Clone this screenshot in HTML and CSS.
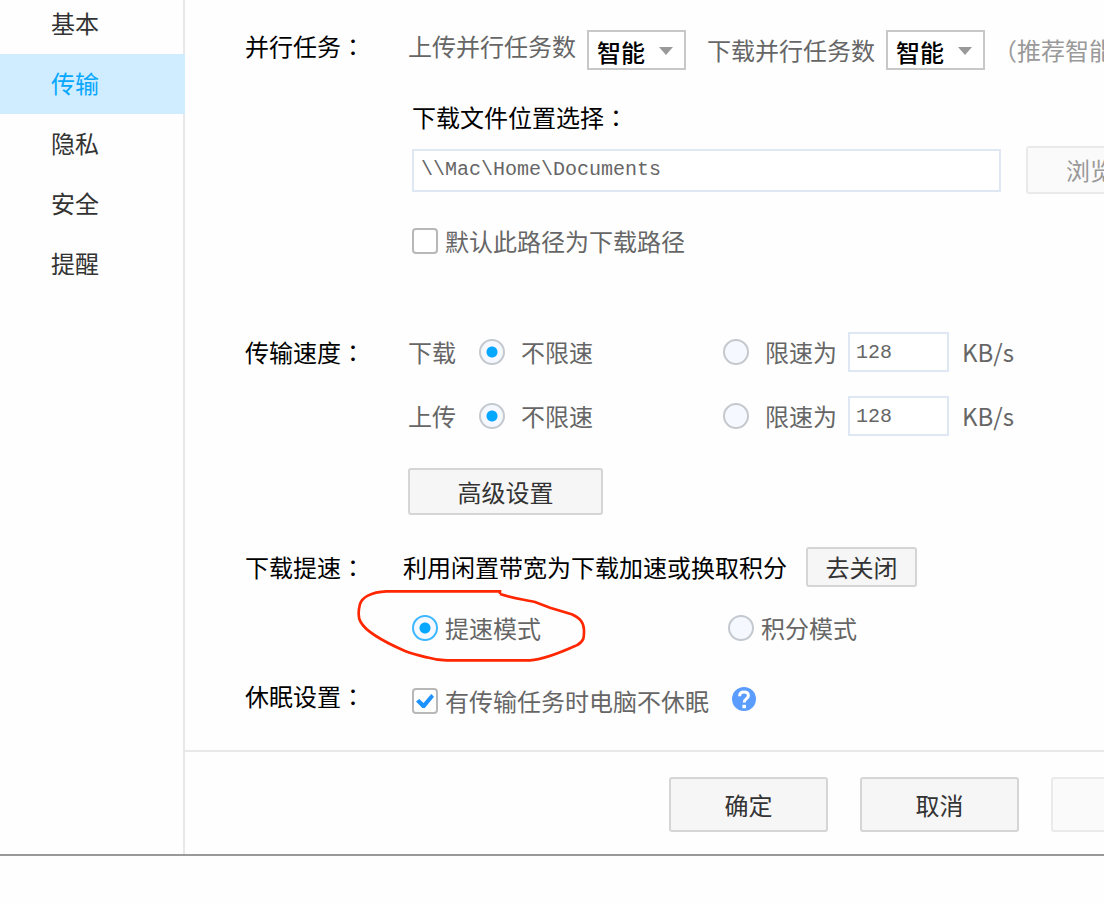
FILE: index.html
```
<!DOCTYPE html>
<html lang="zh-CN">
<head>
<meta charset="utf-8">
<title>设置</title>
<link rel="stylesheet" href="styles.css">
</head>
<body>
<div class="window">
  <nav class="sidebar">
    <a class="tab" href="#basic">基本</a>
    <a class="tab tab-active" href="#transfer">传输</a>
    <a class="tab" href="#privacy">隐私</a>
    <a class="tab" href="#security">安全</a>
    <a class="tab" href="#remind">提醒</a>
  </nav>
  <div class="panel">
    <main class="settings">
      <section class="row tasks">
        <h2 class="title">并行任务<span class="colon" lang="zh-TW">：</span></h2>
        <div class="line">
          <label class="tasks-up" for="up-count">上传并行任务数</label>
          <span class="picker"><select id="up-count"><option>智能</option></select></span>
          <label class="tasks-down" for="down-count">下载并行任务数</label>
          <span class="picker"><select id="down-count"><option>智能</option></select></span>
          <span class="hint">（推荐智能</span>
        </div>
      </section>

      <section class="row location">
        <div class="location-body">
          <label class="strong" for="path">下载文件位置选择<span class="colon" lang="zh-TW">：</span></label>
          <div class="path-line">
            <input class="field path" id="path" type="text" value="\\Mac\Home\Documents">
            <button class="button browse" type="button" disabled>浏览</button>
          </div>
          <label class="choice"><input class="check" type="checkbox">默认此路径为下载路径</label>
        </div>
      </section>

      <section class="row speed">
        <h2 class="title">传输速度<span class="colon" lang="zh-TW">：</span></h2>
        <div class="speed-body">
          <div class="speed-line">
            <span>下载</span>
            <label class="choice wide"><input class="radio" type="radio" name="down" checked>不限速</label>
            <label class="choice wide"><input class="radio" type="radio" name="down">限速为</label>
            <input class="field limit" type="text" value="128" aria-label="下载限速">
            <span>KB/s</span>
          </div>
          <div class="speed-line">
            <span>上传</span>
            <label class="choice wide"><input class="radio" type="radio" name="up" checked>不限速</label>
            <label class="choice wide"><input class="radio" type="radio" name="up">限速为</label>
            <input class="field limit" type="text" value="128" aria-label="上传限速">
            <span>KB/s</span>
          </div>
          <button class="button advanced" type="button">高级设置</button>
        </div>
      </section>

      <section class="row boost">
        <h2 class="title">下载提速<span class="colon" lang="zh-TW">：</span></h2>
        <div class="boost-body">
          <div class="boost-line">
            <span class="strong">利用闲置带宽为下载加速或换取积分</span>
            <button class="button close" type="button">去关闭</button>
          </div>
          <div class="modes">
            <label class="choice"><input class="radio radio-focus" type="radio" name="mode" checked>提速模式</label>
            <label class="choice"><input class="radio" type="radio" name="mode">积分模式</label>
            <svg class="mark" viewBox="378 174 696 228" aria-hidden="true"><path d="M810 192V184H470C420 186 396 204 390 222C384 245 385 264 392 276C410 309 470 339 525 363C545 371 565 376 590 382C610 388 625 391 650 391H900C950 388 1008 360 1042 345C1063 333 1062 322 1062 300C1061 277 1051 265 1025 253L960 233L915 216C880 208 850 205 810 192"/></svg>
          </div>
        </div>
      </section>

      <section class="row sleep">
        <h2 class="title">休眠设置<span class="colon" lang="zh-TW">：</span></h2>
        <div class="sleep-line">
          <label class="choice"><input class="check" type="checkbox" checked>有传输任务时电脑不休眠</label>
          <button class="help" type="button" aria-label="帮助"><svg viewBox="0 0 24 24"><circle cx="12" cy="12" r="12"/><path d="M7.6 9.2C7.6 6.5 9.4 5 12 5S16.4 6.5 16.4 8.8C16.4 11.7 12.2 11.6 12.2 15.4"/><rect x="10.4" y="17.8" width="3.6" height="3.4"/></svg></button>
        </div>
      </section>
    </main>
    <footer class="actions">
      <button class="button action" type="button">确定</button>
      <button class="button action" type="button">取消</button>
      <button class="button action" type="button" aria-label="应用" disabled></button>
    </footer>
  </div>
</div>
</body>
</html>
```
FILE: styles.css
```
* { box-sizing: border-box; }

body {
  margin: 0;
  background: #fefefe;
  color: #666;
  font: 24px/36px "Noto Sans CJK SC", sans-serif;
  overflow-x: hidden;
}

.window {
  display: grid;
  grid-template-columns: 185px minmax(0, 1fr);
  border-bottom: 2px solid #999;
  overflow: hidden;
}

.sidebar {
  margin-top: -6px;
  border-right: 2px solid #e8e8e8;
}

.tab {
  display: block;
  height: 60px;
  padding-left: 51px;
  line-height: 58px;
  color: #333;
  text-decoration: none;
}

.tab-active {
  margin-right: -2px;
  background: #cfedff;
  color: #06a7ff;
}

.panel {
  min-width: 0;
  overflow: hidden;
  white-space: nowrap;
}

.settings {
  padding: 30px 0 31px 60px;
}

.row {
  display: grid;
  grid-template-columns: 163px minmax(0, 1fr);
}

.title {
  margin: 0;
  font-size: 24px;
  font-weight: 400;
  color: #000;
}

/* Traditional Chinese punctuation sits in the middle of its cell */
.colon { font-family: "Noto Sans CJK TC", sans-serif; }

.strong { color: #000; }

.line {
  display: flex;
  align-items: flex-start;
}

.tasks .title { line-height: 32px; }

.tasks-up {
  margin-right: 11px;
  line-height: 32px;
}

.tasks-down {
  margin: 0 11px 0 21px;
  line-height: 40px;
}

.hint {
  margin-left: 8px;
  line-height: 40px;
  color: #999;
}

.picker {
  position: relative;
  flex: none;
}

.picker select {
  display: block;
  width: 99px;
  height: 40px;
  padding: 2px 8px 0;
  border: 2px solid #c8c8c8;
  border-radius: 0;
  background: #fff;
  color: #000;
  font: inherit;
  font-weight: 500;
  appearance: none;
}

.picker::after {
  content: "";
  position: absolute;
  top: 17px;
  right: 13px;
  border: 7px solid transparent;
  border-top: 8px solid #999;
  border-bottom: 0;
  pointer-events: none;
}

.location { padding-top: 29px; }

.location-body {
  grid-column: 2;
  padding-left: 4px;
}

.path-line {
  display: flex;
  align-items: center;
  gap: 25px;
  margin: 11px 0 29px;
}

.field {
  flex: none;
  border: 2px solid #dfe8f2;
  background: #fff;
  color: #666;
  font: 20px "Liberation Mono", monospace;
}

.path {
  width: 589px;
  height: 43px;
  padding: 0 7px 1px;
}

.button {
  flex: none;
  padding: 0;
  border: 2px solid #d5d5d5;
  border-radius: 3px;
  background: #f6f6f6;
  color: #333;
  font: inherit;
}

.button:disabled {
  border-color: #eaeaea;
  background: #fafafa;
  color: #999;
}

.browse {
  width: 128px;
  height: 48px;
}

.choice {
  display: flex;
  align-items: center;
  gap: 7px;
}

.wide { gap: 16px; }

.check,
.radio {
  flex: none;
  width: 26px;
  height: 26px;
  margin: 0;
  border: 2px solid #b8b8b8;
  background: #fff;
  appearance: none;
}

.check {
  display: grid;
  place-items: center;
  border-radius: 4px;
}

.check:checked::after {
  content: "";
  width: 18px;
  height: 14px;
  background: #1c93ff;
  clip-path: polygon(0 53%, 18% 35%, 42% 65%, 85% 0, 100% 19%, 49% 100%, 35% 100%);
}

.radio {
  border-color: #c3c9cf;
  border-radius: 50%;
  background: #f5f9ff;
}

.radio:checked {
  background: radial-gradient(circle, #06a7ff 5px, #f5f9ff 6px);
}

.radio-focus { border-color: #3db8ff; }

.speed { padding-top: 73px; }
.speed .title { line-height: 40px; }

.speed-line {
  display: grid;
  grid-template-columns: 71px 244px 125px 101px auto;
  align-items: center;
  height: 40px;
  margin-bottom: 24px;
}

.speed-line > :last-child { padding-left: 13px; }

.limit {
  width: 101px;
  height: 40px;
  padding: 0 6px;
}

.advanced {
  display: block;
  width: 195px;
  height: 47px;
  margin-top: 32px;
}

.boost { padding-top: 32px; }
.boost .title { line-height: 40px; }

.boost-body { margin-left: -5px; }

.boost-line {
  display: flex;
  align-items: center;
  gap: 19px;
}

.close {
  width: 111px;
  height: 40px;
}

.modes {
  position: relative;
  display: grid;
  grid-template-columns: 316px auto;
  margin-top: 23px;
  padding-left: 9px;
}

.mark {
  position: absolute;
  left: -47px;
  top: -22px;
  width: 232px;
  height: 76px;
  fill: none;
  stroke: #ff2600;
  stroke-width: 8;
  pointer-events: none;
}

.sleep { padding-top: 32px; }

.sleep-line {
  display: flex;
  align-items: center;
  gap: 23px;
  padding: 5px 0 0 4px;
}

.help {
  width: 24px;
  height: 24px;
  margin-bottom: 4px;
  padding: 0;
  border: 0;
  background: none;
}

.help svg {
  display: block;
  fill: #5b9dff;
}

.help path {
  fill: none;
  stroke: #fff;
  stroke-width: 3;
}

.help rect { fill: #fff; }

.actions {
  display: flex;
  gap: 32px;
  padding: 25px 0 22px 484px;
  border-top: 2px solid #e8e8e8;
}

.action {
  width: 159px;
  height: 55px;
}
```
